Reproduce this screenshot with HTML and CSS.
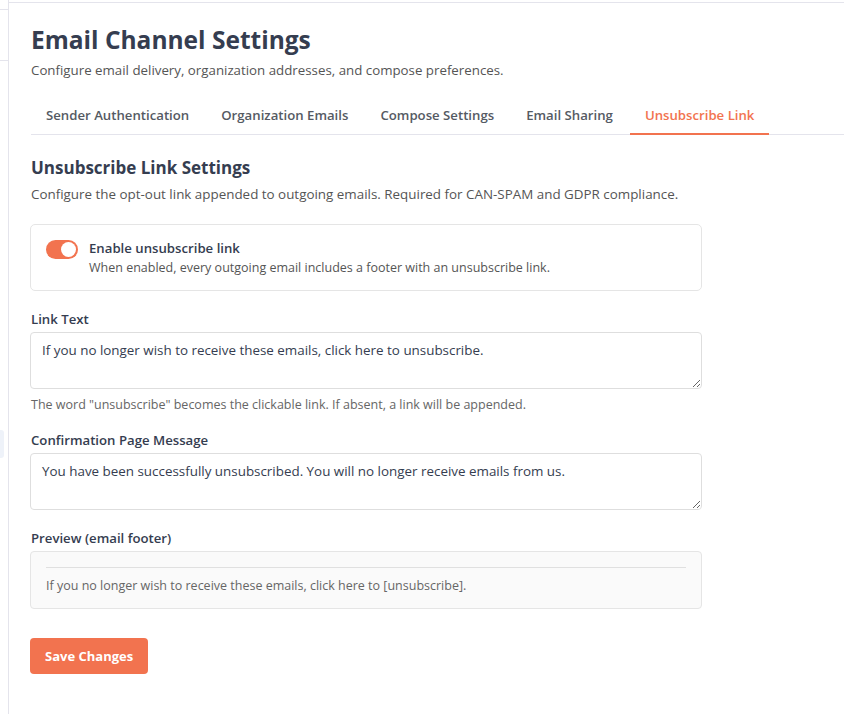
FILE: index.html
```html
<!DOCTYPE html>
<html lang="en">
<head>
    <meta charset="UTF-8">
    <meta name="viewport" content="width=device-width, initial-scale=1.0">
    <title>Email Channel Settings</title>
    <link rel="stylesheet" href="styles.css">
</head>
<body>
    <aside class="sidebar">
        <div class="side-row"></div>
        <div class="side-row side-row-tall"></div>
        <div class="side-active"></div>
    </aside>

    <main class="main">
        <h1>Email Channel Settings</h1>
        <p class="subtitle">Configure email delivery, organization addresses, and compose preferences.</p>

        <nav class="tabs">
            <a class="tab">Sender Authentication</a>
            <a class="tab">Organization Emails</a>
            <a class="tab">Compose Settings</a>
            <a class="tab">Email Sharing</a>
            <a class="tab active">Unsubscribe Link</a>
        </nav>

        <section class="panel">
            <h2>Unsubscribe Link Settings</h2>
            <p class="section-desc">Configure the opt-out link appended to outgoing emails. Required for CAN-SPAM and GDPR compliance.</p>

            <div class="toggle-card">
                <label class="switch">
                    <input type="checkbox" checked>
                    <span class="slider"></span>
                </label>
                <div class="toggle-text">
                    <div class="toggle-title">Enable unsubscribe link</div>
                    <div class="toggle-desc">When enabled, every outgoing email includes a footer with an unsubscribe link.</div>
                </div>
            </div>

            <div class="form-group">
                <label for="linkText">Link Text</label>
                <textarea id="linkText" rows="2">If you no longer wish to receive these emails, click here to unsubscribe.</textarea>
                <p class="hint">The word "unsubscribe" becomes the clickable link. If absent, a link will be appended.</p>
            </div>

            <div class="form-group">
                <label for="confirmMsg">Confirmation Page Message</label>
                <textarea id="confirmMsg" rows="2">You have been successfully unsubscribed. You will no longer receive emails from us.</textarea>
            </div>

            <div class="form-group">
                <label>Preview (email footer)</label>
                <div class="preview">
                    <hr>
                    <p>If you no longer wish to receive these emails, click here to [unsubscribe].</p>
                </div>
            </div>

            <button class="btn" type="button">Save Changes</button>
        </section>
    </main>
</body>
</html>
```

FILE: styles.css
```css
* {
    margin: 0;
    padding: 0;
    box-sizing: border-box;
}

body {
    font-family: 'Open Sans', 'Lato', sans-serif;
    background-color: #fff;
    color: #374151;
    display: flex;
    min-height: 100vh;
}

/* pedaço da barra lateral cortada */
.sidebar {
    width: 9px;
    flex-shrink: 0;
    border-right: 1px solid #e4e4ec;
    overflow: hidden;
}

.side-row {
    height: 10px;
    border-bottom: 1px solid #e4e4ec;
}

.side-row-tall {
    height: 51px;
}

.side-active {
    margin-top: 369px;
    width: 4px;
    height: 28px;
    background-color: #eef2f9;
    border-radius: 0 3px 3px 0;
}

.main {
    flex: 1;
    margin-top: 2px;
    border-top: 1px solid #e4e4ec;
    padding: 21px 0 40px 22px;
}

h1 {
    font-size: 24.5px;
    font-weight: 700;
    color: #353d50;
    line-height: 32px;
}

.subtitle {
    font-size: 13.3px;
    color: #555;
    margin-top: 5px;
    line-height: 18px;
}

.tabs {
    display: flex;
    gap: 2px;
    margin-top: 18px;
    border-bottom: 1px solid #e4e4ec;
}

.tab {
    padding: 9px 15px 9px;
    font-size: 13.2px;
    font-weight: 600;
    color: #555a63;
    line-height: 18px;
    border-bottom: 2px solid transparent;
    margin-bottom: -1px;
    cursor: pointer;
}

.tab.active {
    color: #f2734f;
    border-bottom-color: #f2734f;
}

.panel {
    max-width: 672px;
    margin-left: -1px;
    padding-top: 22px;
}

h2 {
    font-size: 17px;
    font-weight: 700;
    color: #353d50;
    line-height: 22px;
    margin-left: 1px;
}

.section-desc {
    font-size: 13.4px;
    color: #555;
    margin-top: 6px;
    margin-left: 1px;
    line-height: 18px;
}

.toggle-card {
    display: flex;
    align-items: flex-start;
    gap: 11px;
    margin-top: 21px;
    padding: 14px 15px;
    border: 1px solid #e5e5e5;
    border-radius: 5px;
}

.switch {
    position: relative;
    width: 32px;
    height: 19px;
    flex-shrink: 0;
    margin-top: 1px;
}

.switch input {
    display: none;
}

.slider {
    position: absolute;
    inset: 0;
    background-color: #f2734f;
    border-radius: 10px;
}

.slider::after {
    content: "";
    position: absolute;
    top: 2px;
    right: 2px;
    width: 15px;
    height: 15px;
    border-radius: 50%;
    background-color: #fff;
}

.toggle-title {
    font-size: 13.2px;
    font-weight: 600;
    color: #353d50;
    line-height: 18px;
}

.toggle-desc {
    font-size: 12.5px;
    color: #555;
    margin-top: 3px;
    line-height: 16px;
}

.form-group {
    margin-top: 19px;
}

.form-group label {
    display: block;
    font-size: 13.2px;
    font-weight: 600;
    color: #353d50;
    line-height: 18px;
    margin-bottom: 4px;
    margin-left: 1px;
}

textarea {
    display: block;
    width: 100%;
    height: 57px;
    padding: 8px 11px;
    border: 1px solid #dedede;
    border-radius: 4px;
    font-family: inherit;
    font-size: 13.4px;
    color: #353d50;
    line-height: 18px;
    resize: vertical;
}

textarea:focus {
    border-color: #f2734f;
    outline: none;
}

.hint {
    font-size: 12.5px;
    color: #666;
    margin-top: 9px;
    margin-left: 1px;
    line-height: 14px;
}

.preview {
    background-color: #fafafa;
    border: 1px solid #e5e5e5;
    border-radius: 4px;
    padding: 15px 15px 14px;
}

.preview hr {
    border: none;
    border-top: 1px solid #e0e0e0;
}

.preview p {
    font-size: 12.5px;
    color: #666;
    margin-top: 10px;
    line-height: 16px;
}

.btn {
    margin-top: 29px;
    height: 36px;
    padding: 0 15px;
    border: none;
    border-radius: 4px;
    background-color: #f2734f;
    color: #fff;
    font-family: inherit;
    font-size: 13px;
    font-weight: 700;
    cursor: pointer;
}

.btn:hover {
    background-color: #e0613e;
}
```
